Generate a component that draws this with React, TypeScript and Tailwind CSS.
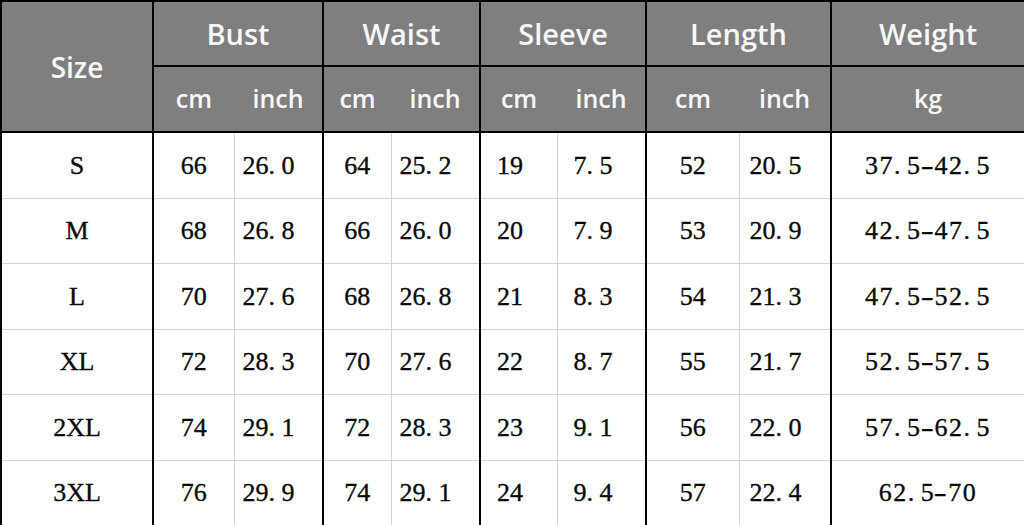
import React from "react";

const rows: string[][] = [
  ["S", "66", "26.0", "64", "25.2", "19", "7.5", "52", "20.5", "37.5-42.5"],
  ["M", "68", "26.8", "66", "26.0", "20", "7.9", "53", "20.9", "42.5-47.5"],
  ["L", "70", "27.6", "68", "26.8", "21", "8.3", "54", "21.3", "47.5-52.5"],
  ["XL", "72", "28.3", "70", "27.6", "22", "8.7", "55", "21.7", "52.5-57.5"],
  ["2XL", "74", "29.1", "72", "28.3", "23", "9.1", "56", "22.0", "57.5-62.5"],
  ["3XL", "76", "29.9", "74", "29.1", "24", "9.4", "57", "22.4", "62.5-70"],
];

const heights = ["h-[66px]", "h-[65px]", "h-[66px]", "h-[65px]", "h-[66px]", "h-[65px]"];

function Num({ v }: { v: string }) {
  const parts = v.split(/([.-])/);
  return (
    <>
      {parts.map((p, i) =>
        p === "." ? (
          <span key={i} className="inline-block w-[0.5em] text-left">
            .
          </span>
        ) : p === "-" ? (
          <span key={i} className="inline-block w-[0.5em] text-center scale-x-[1.5]">
            -
          </span>
        ) : (
          <span key={i}>{p}</span>
        )
      )}
    </>
  );
}

const groupStart = new Set([1, 3, 5, 7, 9]);
const cellAlign = [
  "text-center",
  "text-center",
  "text-left pl-[8px]",
  "text-center",
  "text-left pl-[8px]",
  "text-left pl-[16px]",
  "text-left pl-[16px]",
  "text-center",
  "text-left pl-[10px]",
  "text-center tracking-[1.5px]",
];

export default function App() {
  const headFont = { fontFamily: '"Open Sans", "Noto Sans", sans-serif' };
  return (
    <div className="w-[1024px] h-[525px] bg-white overflow-hidden">
      <table className="w-[1024px] table-fixed border-collapse">
        <colgroup>
          <col className="w-[152px]" />
          <col className="w-[81px]" />
          <col className="w-[89px]" />
          <col className="w-[68px]" />
          <col className="w-[89px]" />
          <col className="w-[77px]" />
          <col className="w-[89px]" />
          <col className="w-[93px]" />
          <col className="w-[92px]" />
          <col className="w-[194px]" />
        </colgroup>
        <thead style={headFont} className="text-[#f7f7f7] font-semibold">
          <tr className="h-[65px]">
            <th
              rowSpan={2}
              className="bg-[#7f7f7f] border-2 border-black text-[28px] font-semibold"
            >
              Size
            </th>
            {["Bust", "Waist", "Sleeve", "Length"].map((h) => (
              <th
                key={h}
                colSpan={2}
                className="bg-[#7f7f7f] border-2 border-black text-[29px] font-semibold"
              >
                {h}
              </th>
            ))}
            <th className="bg-[#7f7f7f] border-2 border-black text-[29px] font-semibold">
              Weight
            </th>
          </tr>
          <tr className="h-[66px]">
            {[0, 1, 2, 3].map((g) => (
              <React.Fragment key={g}>
                <th className="bg-[#7f7f7f] border-2 border-black border-r-0 text-[25px] font-semibold">
                  cm
                </th>
                <th className="bg-[#7f7f7f] border-2 border-black border-l-0 text-[25px] font-semibold">
                  inch
                </th>
              </React.Fragment>
            ))}
            <th className="bg-[#7f7f7f] border-2 border-black text-[25px] font-semibold">
              kg
            </th>
          </tr>
        </thead>
        <tbody
          className="text-[#0a0a0a] text-[26px] [-webkit-text-stroke:0.35px_#0a0a0a]"
          style={{ fontFamily: '"Liberation Serif", "DejaVu Serif", serif' }}
        >
          {rows.map((r, ri) => (
            <tr key={ri} className={heights[ri]}>
              {r.map((c, ci) => (
                <td
                  key={ci}
                  className={[
                    "border border-[#d4d4d4] p-0",
                    cellAlign[ci],
                    ci === 0 ? "border-l-2 border-l-black" : "",
                    groupStart.has(ci) ? "border-l-2 border-l-black" : "",
                    ci === 9 ? "border-r-2 border-r-black" : "",
                  ].join(" ")}
                >
                  <Num v={c} />
                </td>
              ))}
            </tr>
          ))}
        </tbody>
      </table>
    </div>
  );
}
